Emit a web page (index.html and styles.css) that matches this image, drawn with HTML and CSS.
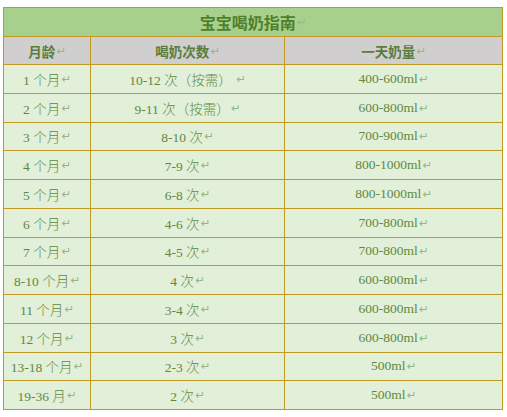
FILE: index.html
```html
<!DOCTYPE html>
<html lang="zh-CN">
<head>
<meta charset="utf-8">
<link rel="stylesheet" href="styles.css">
</head>
<body>
<div class="sheet">
  <div class="grid">
    <div class="cell title">宝宝喝奶指南<span class="pm">↵</span></div>
    <div class="cell head">月龄<span class="pm">↵</span></div>
    <div class="cell head">喝奶次数<span class="pm">↵</span></div>
    <div class="cell head">一天奶量<span class="pm">↵</span></div>

    <div class="cell">1 个月<span class="pm">↵</span></div>
    <div class="cell">10-12 次（按需） <span class="pm">↵</span></div>
    <div class="cell">400-600ml<span class="pm">↵</span></div>

    <div class="cell">2 个月<span class="pm">↵</span></div>
    <div class="cell">9-11 次（按需）<span class="pm">↵</span></div>
    <div class="cell">600-800ml<span class="pm">↵</span></div>

    <div class="cell">3 个月<span class="pm">↵</span></div>
    <div class="cell">8-10 次<span class="pm">↵</span></div>
    <div class="cell">700-900ml<span class="pm">↵</span></div>

    <div class="cell">4 个月<span class="pm">↵</span></div>
    <div class="cell">7-9 次<span class="pm">↵</span></div>
    <div class="cell">800-1000ml<span class="pm">↵</span></div>

    <div class="cell">5 个月<span class="pm">↵</span></div>
    <div class="cell">6-8 次<span class="pm">↵</span></div>
    <div class="cell">800-1000ml<span class="pm">↵</span></div>

    <div class="cell">6 个月<span class="pm">↵</span></div>
    <div class="cell">4-6 次<span class="pm">↵</span></div>
    <div class="cell">700-800ml<span class="pm">↵</span></div>

    <div class="cell">7 个月<span class="pm">↵</span></div>
    <div class="cell">4-5 次<span class="pm">↵</span></div>
    <div class="cell">700-800ml<span class="pm">↵</span></div>

    <div class="cell">8-10 个月<span class="pm">↵</span></div>
    <div class="cell">4 次<span class="pm">↵</span></div>
    <div class="cell">600-800ml<span class="pm">↵</span></div>

    <div class="cell">11 个月<span class="pm">↵</span></div>
    <div class="cell">3-4 次<span class="pm">↵</span></div>
    <div class="cell">600-800ml<span class="pm">↵</span></div>

    <div class="cell">12 个月<span class="pm">↵</span></div>
    <div class="cell">3 次<span class="pm">↵</span></div>
    <div class="cell">600-800ml<span class="pm">↵</span></div>

    <div class="cell">13-18 个月<span class="pm">↵</span></div>
    <div class="cell">2-3 次<span class="pm">↵</span></div>
    <div class="cell">500ml<span class="pm">↵</span></div>

    <div class="cell">19-36 月<span class="pm">↵</span></div>
    <div class="cell">2 次<span class="pm">↵</span></div>
    <div class="cell">500ml<span class="pm">↵</span></div>
  </div>
</div>
</body>
</html>
```
FILE: styles.css
```css
html, body {
  margin: 0;
  padding: 0;
  background: #ffffff;
}
.sheet {
  padding: 7px 0 0 3px;
}
.grid {
  display: grid;
  grid-template-columns: 87px 194px 218px;
  grid-template-rows: 29px 28px repeat(12, 28.75px);
  width: 499px;
  border-left: 1px solid #c09a20;
  border-top: 1px solid #c09a20;
  font-family: "Liberation Serif", "Noto Sans CJK SC", serif;
  font-size: 13.5px;
  font-weight: 300;
  color: #5e8a3e;
}
.cell {
  box-sizing: border-box;
  border-right: 1px solid #c09a20;
  border-bottom: 1px solid #c09a20;
  background: #e2efd9;
  display: flex;
  align-items: center;
  justify-content: center;
  white-space: pre;
}
.title {
  grid-column: 1 / 4;
  background: #a8d08d;
  font-size: 16px;
  font-weight: bold;
  color: #4f7f2c;
}
.head {
  background: #d0cece;
  font-size: 13.5px;
  font-weight: bold;
  color: #5a7d3c;
}
.pm {
  font-family: "DejaVu Sans", sans-serif;
  font-size: 11.5px;
  font-weight: normal;
  color: #98b681;
  margin-left: 1px;
}
```
